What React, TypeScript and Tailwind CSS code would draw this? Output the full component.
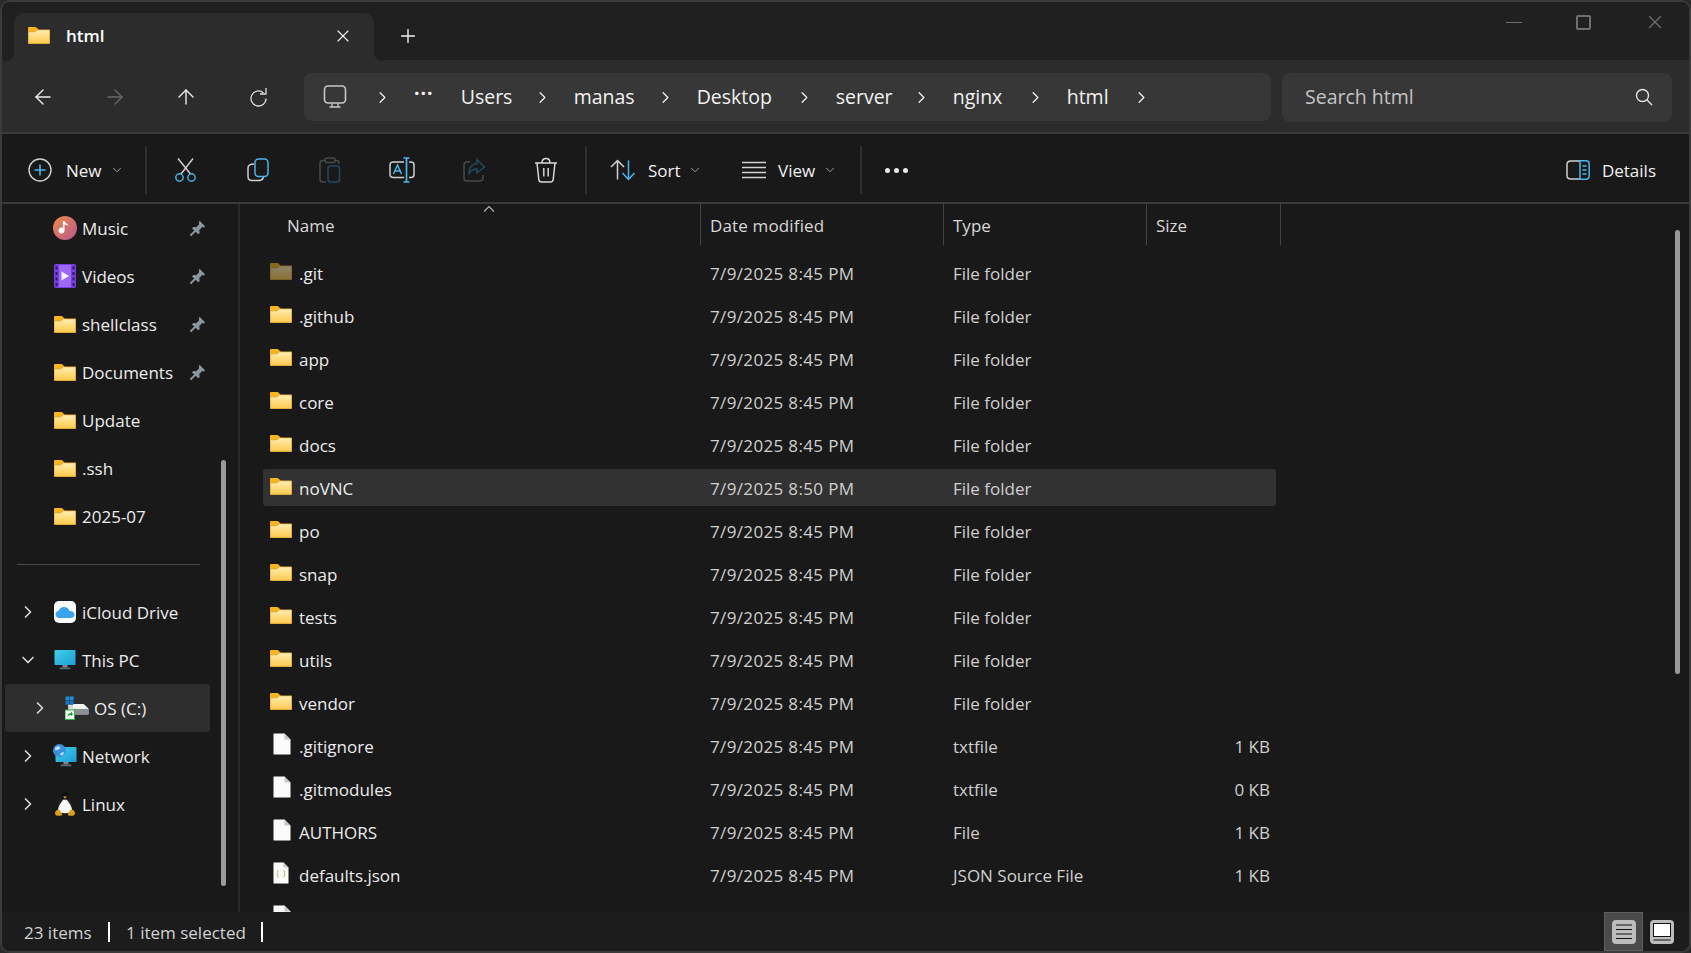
import { ArrowLeft, ArrowRight, ArrowUp, ChevronDown, ChevronRight, Plus, X } from "lucide-react";

const FONT = { fontFamily: '"Open Sans", "Noto Sans", sans-serif' };

function Folder({ dim = false }: { dim?: boolean }) {
  return (
    <svg width="22" height="17" viewBox="0 0 22 17" className={dim ? "shrink-0 opacity-50" : "shrink-0"}>
      <defs>
        <linearGradient id="fold" x1="0" y1="0" x2="0" y2="1">
          <stop offset="0" stopColor="#ffeeb0" />
          <stop offset="1" stopColor="#fdc950" />
        </linearGradient>
      </defs>
      <path d="M0 1.2C0 .5.5 0 1.2 0h6c.5 0 .9.2 1.2.5L11 3v3H0z" fill="#f8b61e" />
      <path d="M0 4.5h6.5L9 2.5h12c.6 0 1 .4 1 1V16c0 .6-.4 1-1 1H1c-.6 0-1-.4-1-1z" fill="#d9a233" />
      <path d="M.6 5.2h6.2L9.2 3.2h11.6c.3 0 .5.2.5.5v12c0 .4-.2.6-.5.6H1.1c-.3 0-.5-.2-.5-.6z" fill="url(#fold)" />
    </svg>
  );
}

function FileIcon({ json = false }: { json?: boolean }) {
  return (
    <svg width={json ? 16 : 18} height="22" viewBox={json ? "0 0 16 22" : "0 0 18 22"} className="shrink-0 ml-[3px]">
      <path
        d={json ? "M.5 1.2C.5.8.8.5 1.2.5h9.300l5 5v15.300c0 .4-.3.7-.7.7H1.2c-.4 0-.7-.3-.7-.7z" : "M.5 1.2C.5.8.8.5 1.2.5h10.300l6 6v14.300c0 .4-.3.7-.7.7H1.2c-.4 0-.7-.3-.7-.7z"}
        fill="#fbfbfb"
        stroke="#8f8f8f"
        strokeWidth=".6"
      />
      <path d={json ? "M10.500.7v4.800h4.800z" : "M11.500.7v5.800h5.800z"} fill="#c8c8c8" />
      {json && (
        <path
          d="M5.700 8.500c-1 0-1.200.5-1.200 1.300v1c0 .6-.3.9-.9 1 .6.100.9.400.9 1v1c0 .8.200 1.300 1.200 1.300M10.300 8.500c1 0 1.200.5 1.200 1.300v1c0 .6.300.9.900 1-.6.100-.9.400-.9 1v1c0 .8-.2 1.300-1.200 1.300"
          fill="none"
          stroke="#c3cb6a"
          strokeWidth="1.100"
        />
      )}
    </svg>
  );
}

function Pin() {
  return (
    <svg width="16" height="16" viewBox="0 0 16 16" className="shrink-0">
      <path d="M9.6.8 15.2 6.4l-1.3 1-1.6-.4-3 3 .3 3-1.3 1.2L2.1 8.4l1.1-1.4 3 .2 3-3-.4-1.6z" fill="#8a96a3" />
      <path d="M5 11 1 15" stroke="#8a96a3" strokeWidth="1.8" strokeLinecap="round" />
    </svg>
  );
}

function Music() {
  return (
    <svg width="24" height="24" viewBox="0 0 24 24">
      <defs>
        <linearGradient id="mus" x1="0" y1="0" x2="1" y2="1">
          <stop offset="0" stopColor="#f08a4b" />
          <stop offset="1" stopColor="#b8568f" />
        </linearGradient>
      </defs>
      <circle cx="12" cy="12" r="12" fill="url(#mus)" />
      <path d="M11.5 5v9.5a3 3 0 1 1-1.6-2.6V5zM11.5 5c.5 2.5 3.5 2.6 4 5-1.5-1-3-1.2-4-1.2z" fill="#fff" />
    </svg>
  );
}

function Videos() {
  return (
    <svg width="22" height="24" viewBox="0 0 22 24">
      <rect width="22" height="24" rx="2" fill="#7a3de0" />
      <rect x="5" y="1" width="12" height="22" fill="#9a6bf0" />
      <path d="M7.5 7.5v9l7.5-4.5z" fill="#f4f0ff" />
      <path d="M1.5 2.5h2v3h-2zM1.5 8h2v3h-2zM1.5 13.5h2v3h-2zM1.5 19h2v3h-2zM18.5 2.5h2v3h-2zM18.5 8h2v3h-2zM18.5 13.5h2v3h-2zM18.5 19h2v3h-2z" fill="#2a1866" />
    </svg>
  );
}

function ICloud() {
  return (
    <svg width="22" height="22" viewBox="0 0 22 22">
      <rect width="22" height="22" rx="5" fill="#f8f9fb" />
      <path d="M5.500 17C3 17 1.500 15.300 1.500 13.300c0-1.800 1.300-3.300 3.100-3.500C5.300 7.500 7.500 6 10 6c2.600 0 4.700 1.600 5.300 3.900 2.900-.2 5.200 1.200 5.200 3.700 0 2-1.700 3.400-3.800 3.400z" fill="#3ba2ec" />
    </svg>
  );
}

function Monitor({ w = 22 }: { w?: number }) {
  return (
    <svg width={w} height="20" viewBox="0 0 22 20">
      <defs>
        <linearGradient id="scr" x1="0" y1="0" x2="1" y2="1">
          <stop offset="0" stopColor="#3fd2e6" />
          <stop offset="1" stopColor="#1f9bd8" />
        </linearGradient>
      </defs>
      <rect x=".5" y="0" width="21" height="15" rx=".8" fill="url(#scr)" />
      <rect x="8.5" y="15" width="5" height="2.500" fill="#7b8794" />
      <rect x="5.500" y="17.500" width="11" height="1.800" rx=".6" fill="#5c6670" />
    </svg>
  );
}

function Network() {
  return (
    <div className="relative w-[24px] h-[24px]">
      <div className="absolute left-[2px] top-[3px]">
        <Monitor w={22} />
      </div>
      <svg width="13" height="13" viewBox="0 0 13 13" className="absolute left-0 top-0">
        <circle cx="6.500" cy="6.500" r="6.500" fill="#3c8fd8" />
        <path d="M2 4c2-2 4-2 5-1s-1 3-3 3-2 0-2-2zM8 9c1-1 3-1 3 0s-2 2.500-3 2.500-1-1.500 0-2.500z" fill="#bfe0f5" />
      </svg>
    </div>
  );
}

function Drive() {
  return (
    <svg width="24" height="24" viewBox="0 0 24 24">
      <path d="M3 8.500h16l4.500 4v6h-20z" fill="#d9dcdf" />
      <path d="M8 8h10.500L23 12.500H8z" fill="#f5f5f5" />
      <rect x="8" y="13" width="15.500" height="5" fill="#8d9094" />
      <rect x=".5" y=".5" width="3.800" height="3.800" fill="#1e8fdc" />
      <rect x="4.800" y=".5" width="3.800" height="3.800" fill="#1e8fdc" />
      <rect x=".5" y="4.800" width="3.800" height="3.800" fill="#1875c7" />
      <rect x="4.800" y="4.800" width="3.800" height="3.800" fill="#1875c7" />
      <rect x="0" y="14" width="9.500" height="9.500" fill="#f4fff4" stroke="#2fb344" />
      <path d="M2.500 21c0-3 1.500-4 3.500-4v-1.500l2 2.500-2 2.500V19c-1.500 0-2.500.5-3.500 2z" fill="#1c9e3a" />
    </svg>
  );
}

function Tux() {
  return (
    <svg width="20" height="24" viewBox="0 0 20 24">
      <ellipse cx="10" cy="13" rx="7" ry="9.500" fill="#202020" />
      <path d="M10 6C6.500 9 2.500 15 3 19c2 3 12 3 14 0 .5-4-3.500-10-7-13z" fill="#f8f8f8" />
      <circle cx="10" cy="4" r="3.800" fill="#101010" />
      <path d="M8 4.500h4l-2 2.200z" fill="#e9a81f" />
      <path d="M0 21c.5-2.500 2.500-4 4.500-3.500L7.500 23c-1.500 1-5 1-6.500.2-.6-.4-1-1.300-1-2.200zM20 21c-.5-2.500-2.500-4-4.500-3.500L12.500 23c1.500 1 5 1 6.500.2.6-.4 1-1.300 1-2.200z" fill="#dca01e" />
    </svg>
  );
}

function PcOutline() {
  return (
    <svg width="24" height="24" viewBox="0 0 24 24" fill="none" stroke="#c8c8c8" strokeWidth="1.600">
      <rect x="1.500" y="1" width="21" height="17" rx="3.500" />
      <path d="M9 18.500v3M15 18.500v3M6.500 22h11" strokeWidth="1.300" />
    </svg>
  );
}

function Refresh() {
  return (
    <svg width="20" height="20" viewBox="0 0 20 20" fill="none" stroke="#dcdcdc" strokeWidth="1.300">
      <path d="M17 11.500A7.500 7.500 0 1 1 14.500 5.900" />
      <path d="M17 1v6h-6" strokeLinejoin="round" />
    </svg>
  );
}

function Magnifier() {
  return (
    <svg width="18" height="18" viewBox="0 0 18 18" fill="none" stroke="#e4e4e4" strokeWidth="1.400">
      <circle cx="7.500" cy="7.500" r="6" />
      <path d="M11.800 11.800 17 17" />
    </svg>
  );
}

function Cut() {
  return (
    <svg width="24" height="24" viewBox="0 0 24 24" fill="none" strokeWidth="1.400">
      <path d="M4 .5 16.500 16M19 .5 7 16" stroke="#d2d2d2" />
      <circle cx="5.500" cy="19.500" r="3.700" stroke="#4db4ea" />
      <circle cx="17.500" cy="19.500" r="3.700" stroke="#4db4ea" />
    </svg>
  );
}

function Copy() {
  return (
    <svg width="24" height="24" viewBox="0 0 24 24" fill="none" strokeWidth="1.500">
      <path d="M8 6C4 6 2 7.500 2 10v8.500C2 21 3.500 22.500 6 22.500h7c2.500 0 4-1.200 4.500-3.500" stroke="#cfcfcf" />
      <rect x="9" y="1" width="13" height="17.500" rx="3.500" stroke="#4db4ea" />
    </svg>
  );
}

function Paste() {
  return (
    <svg width="24" height="26" viewBox="0 0 24 26" fill="none" strokeWidth="1.500">
      <path d="M7 3.500H5C3 3.500 2 4.500 2 6.500v16C2 24 3 25 5 25h3M17 3.500h1c2 0 3 1 3 3V7" stroke="#4a4a4a" />
      <rect x="7" y="1" width="10" height="4.500" rx="2" stroke="#4a4a4a" />
      <rect x="10" y="9" width="11.500" height="16" rx="2.500" stroke="#234a60" />
    </svg>
  );
}

function Rename() {
  return (
    <svg width="26" height="26" viewBox="0 0 26 26" fill="none" strokeWidth="1.500">
      <path d="M15 5H4.500C2.500 5 1 6 1 8v9.500c0 2 1.500 3 3.500 3H15M20 5h2c1.800 0 3 1 3 3v9.500c0 2-1.200 3-3 3h-2" stroke="#cfcfcf" />
      <path d="M4.500 17 8.500 8l4 9M6 14h5" stroke="#4db4ea" />
      <path d="M14.500 1h6M17.500 1v24M14.500 25h6" stroke="#4db4ea" strokeWidth="1.700" />
    </svg>
  );
}

function Share() {
  return (
    <svg width="24" height="24" viewBox="0 0 24 24" fill="none" strokeWidth="1.500">
      <path d="M8 4H5C3 4 2 5 2 7v13c0 2 1 3 3 3h13c2 0 3-1 3-3v-3" stroke="#484848" />
      <path d="M15 1.500 22.500 9 15 15v-4c-4 0-6 1.500-8 4.500 0-6 3-9.500 8-10z" stroke="#234a60" />
    </svg>
  );
}

function Trash() {
  return (
    <svg width="24" height="26" viewBox="0 0 24 26" fill="none" stroke="#d8d8d8" strokeWidth="1.500">
      <path d="M1 6h22M8 6c0-2.500 1-4.500 4-4.500S16 3.500 16 6M3 6l1.800 16.500c.2 1.600 1 2.500 2.700 2.500h9c1.700 0 2.500-.9 2.700-2.500L21 6M9.800 11v8.500M14.200 11v8.500" />
    </svg>
  );
}

function SortIcon() {
  return (
    <svg width="26" height="22" viewBox="0 0 26 22" fill="none" strokeWidth="1.500">
      <path d="M7.500 20.500V1.500M1 8l6.500-6.500L14 8" stroke="#d2d2d2" />
      <path d="M18.500 1.500v19M12.500 14l6 6.500 6-6.500" stroke="#4db4ea" />
    </svg>
  );
}

function ViewLines() {
  return (
    <svg width="24" height="18" viewBox="0 0 24 18" stroke="#d2d2d2" strokeWidth="1.500">
      <path d="M0 1.500h24M0 6.500h24M0 11.500h24M0 16.500h24" />
    </svg>
  );
}

function DetailsIcon() {
  return (
    <svg width="24" height="20" viewBox="0 0 24 20" fill="none" strokeWidth="1.500">
      <path d="M14 1H5C2.500 1 1 2.500 1 4.500v11C1 17.500 2.500 19 5 19h9" stroke="#cfcfcf" />
      <path d="M14 .8h6c2 0 3.200 1.500 3.200 3.700v11c0 2.200-1.200 3.700-3.200 3.700h-6z" stroke="#4db4ea" />
      <path d="M16.500 6h4M16.500 10h4M16.500 14h4" stroke="#4db4ea" />
    </svg>
  );
}

function PlusCircle() {
  return (
    <svg width="24" height="24" viewBox="0 0 24 24" fill="none" strokeWidth="1.400">
      <circle cx="12" cy="12" r="11" stroke="#d0d0d0" />
      <path d="M12 6.500v11M6.500 12h11" stroke="#4db4ea" strokeWidth="1.600" />
    </svg>
  );
}

function Crumb({ label, w }: { label: string; w: string }) {
  return (
    <div className={`flex items-center justify-between shrink-0 ${w}`}>
      <span>{label}</span>
      <ChevronRight size={19} strokeWidth={1.6} className="mr-[22px] text-[#f0f0f0]" />
    </div>
  );
}

function Sep() {
  return <div className="w-[2px] h-[48px] bg-[#2f2f2f] shrink-0" />;
}

function ToolBtn({ children }: { children: React.ReactNode }) {
  return <div className="w-[72px] h-[48px] flex items-center justify-center shrink-0">{children}</div>;
}

const pinned = ["shellclass", "Documents"];
const plain = ["Update", ".ssh", "2025-07"];

const folders = [".github", "app", "core", "docs"];
const folders2 = ["po", "snap", "tests", "utils", "vendor"];

function Row({
  icon,
  name,
  date = "7/9/2025 8:45 PM",
  type = "File folder",
  size,
  selected,
}: {
  icon: React.ReactNode;
  name?: string;
  date?: string;
  type?: string;
  size?: string;
  selected?: boolean;
}) {
  return (
    <div
      className={`grid grid-cols-[447px_243px_203px_120px] items-center h-[37px] w-[1013px] ml-[23px] shrink-0 rounded-[3px] text-[#cfcfcf] ${
        selected ? "bg-[#323232]" : ""
      }`}
    >
      <div className="flex items-center pl-[7px]">
        <div className="w-[29px] -mt-[3px]">{icon}</div>
        <span className="text-[#ececec] pt-[2px]">{name}</span>
      </div>
      <span className="pt-[2px] tracking-[0.35px]">{date}</span>
      <span className="pt-[2px]">{type}</span>
      <span className="pt-[2px] text-right pr-[6px]">{size}</span>
    </div>
  );
}

function NavRow({
  icon,
  label,
  pin,
  chevron,
  open,
  selected,
  indent,
}: {
  icon: React.ReactNode;
  label: string;
  pin?: boolean;
  chevron?: boolean;
  open?: boolean;
  selected?: boolean;
  indent?: boolean;
}) {
  return (
    <div className={`flex items-center h-[48px] w-[205px] ml-[3px] rounded-[3px] ${selected ? "bg-[#2e2e2e]" : ""}`}>
      <div className={`flex items-center justify-center shrink-0 w-[20px] text-[#d8d8d8] ${indent ? "ml-[25px]" : "ml-[13px]"}`}>
        {chevron &&
          (open ? (
            <ChevronDown size={24} strokeWidth={2} />
          ) : (
            <ChevronRight size={24} strokeWidth={2} />
          ))}
      </div>
      <div className="w-[24px] ml-[15px] flex items-center justify-center shrink-0">{icon}</div>
      <span className="ml-[5px] text-[#ececec]">{label}</span>
      {pin && (
        <span className="ml-auto mr-[4px]">
          <Pin />
        </span>
      )}
    </div>
  );
}

export default function App() {
  return (
    <div className="w-[1691px] h-[953px] bg-[#2a2a2a] overflow-hidden text-[17px] leading-none" style={FONT}>
      <div className="flex flex-col h-full border-2 border-[#3b3b3b] rounded-[10px] overflow-hidden bg-[#191919]">
        {/* tab strip */}
        <div className="flex items-end h-[58px] bg-[#202020] shrink-0 pl-[12px]">
          <div className="relative flex items-center w-[360px] h-[48px] bg-[#2c2c2c] rounded-t-[10px] pl-[14px] pb-[3px] -mb-[1px]">
            <div className="absolute bottom-0 -left-[10px] w-[10px] h-[10px] bg-[#2c2c2c]">
              <div className="w-full h-full bg-[#202020] rounded-br-[8px]" />
            </div>
            <div className="absolute bottom-0 -right-[10px] w-[10px] h-[10px] bg-[#2c2c2c]">
              <div className="w-full h-full bg-[#202020] rounded-bl-[8px]" />
            </div>
            <Folder />
            <span className="ml-[16px] font-semibold text-white">html</span>
            <X size={20} strokeWidth={1.4} className="ml-auto mr-[21px] text-[#eeeeee]" />
          </div>
          <div className="h-[48px] ml-[23px] flex items-center">
            <Plus size={22} strokeWidth={1.5} className="text-[#f0f0f0]" />
          </div>
          <div className="ml-auto flex self-start items-center h-[40px] text-[#6f6f6f] pr-[23px]">
            <div className="w-[16px] h-[1px] bg-[#6f6f6f] mr-[54px]" />
            <div className="w-[15px] h-[15px] border-2 border-[#6f6f6f] rounded-[2px] mr-[53px]" />
            <X size={22} strokeWidth={1.3} />
          </div>
        </div>

        {/* address row */}
        <div className="flex items-center h-[72px] pt-[2px] bg-[#2c2c2c] shrink-0">
          <ArrowLeft size={24} strokeWidth={1.4} className="ml-[29px] text-[#ededed]" />
          <ArrowRight size={24} strokeWidth={1.4} className="ml-[48px] text-[#686868]" />
          <ArrowUp size={24} strokeWidth={1.4} className="ml-[47px] text-[#ededed]" />
          <div className="ml-[51px] w-[20px]">
            <Refresh />
          </div>
          <div className="ml-[35px] flex items-center w-[967px] h-[48px] bg-[#373737] rounded-[8px] text-[19.5px] text-[#f2f2f2]">
            <div className="ml-[19px] mr-[26px]">
              <PcOutline />
            </div>
            <ChevronRight size={19} strokeWidth={1.6} className="text-[#f0f0f0]" />
            <span className="ml-[22px] mr-[27px] tracking-[1px] -mt-[8px] font-bold">···</span>
            <Crumb label="Users" w="w-[113px]" />
            <Crumb label="manas" w="w-[123px]" />
            <Crumb label="Desktop" w="w-[139px]" />
            <Crumb label="server" w="w-[117px]" />
            <Crumb label="nginx" w="w-[114px]" />
            <Crumb label="html" w="w-[106px]" />
          </div>
          <div className="ml-[11px] flex items-center justify-between w-[390px] h-[49px] bg-[#373737] rounded-[8px] pl-[23px] pr-[19px] text-[19.5px] text-[#c4c4c4]">
            <span>Search html</span>
            <Magnifier />
          </div>
        </div>
        <div className="h-[2px] bg-[#3a3a3a] shrink-0" />

        {/* command bar */}
        <div className="flex items-center h-[68px] pt-[4px] bg-[#191919] shrink-0 text-[#f0f0f0]">
          <div className="flex items-center w-[143px] pl-[26px]">
            <PlusCircle />
            <span className="ml-[14px]">New</span>
            <ChevronDown size={14} strokeWidth={1.4} className="ml-[8px] text-[#bdbdbd]" />
          </div>
          <Sep />
          <div className="flex ml-[3px]">
            <ToolBtn><Cut /></ToolBtn>
            <ToolBtn><Copy /></ToolBtn>
            <ToolBtn><Paste /></ToolBtn>
            <ToolBtn><Rename /></ToolBtn>
            <ToolBtn><Share /></ToolBtn>
            <ToolBtn><Trash /></ToolBtn>
          </div>
          <div className="ml-[3px]">
            <Sep />
          </div>
          <div className="flex items-center w-[132px] pl-[23px] shrink-0">
            <SortIcon />
            <span className="ml-[12px]">Sort</span>
            <ChevronDown size={14} strokeWidth={1.4} className="ml-[7px] text-[#bdbdbd]" />
          </div>
          <div className="flex items-center w-[141px] pl-[23px] shrink-0">
            <ViewLines />
            <span className="ml-[12px]">View</span>
            <ChevronDown size={14} strokeWidth={1.4} className="ml-[8px] text-[#bdbdbd]" />
          </div>
          <Sep />
          <div className="flex gap-[4px] ml-[23px]">
            <span className="w-[5px] h-[5px] rounded-full bg-[#e8e8e8]" />
            <span className="w-[5px] h-[5px] rounded-full bg-[#e8e8e8]" />
            <span className="w-[5px] h-[5px] rounded-full bg-[#e8e8e8]" />
          </div>
          <div className="ml-auto flex items-center pr-[33px]">
            <DetailsIcon />
            <span className="ml-[12px]">Details</span>
          </div>
        </div>
        <div className="h-[2px] bg-[#3a3a3a] shrink-0" />

        {/* body */}
        <div className="flex flex-1 min-h-0 bg-[#191919]">
          <div className="relative w-[236px] shrink-0 overflow-hidden text-[17px]">
            <NavRow icon={<Music />} label="Music" pin />
            <NavRow icon={<Videos />} label="Videos" pin />
            {pinned.map((n) => (
              <NavRow key={n} icon={<Folder />} label={n} pin />
            ))}
            {plain.map((n) => (
              <NavRow key={n} icon={<Folder />} label={n} />
            ))}
            <div className="h-[48px] flex items-center">
              <div className="ml-[15px] w-[183px] h-[1px] bg-[#4a4a4a]" />
            </div>
            <NavRow icon={<ICloud />} label="iCloud Drive" chevron />
            <NavRow icon={<Monitor />} label="This PC" chevron open />
            <NavRow icon={<Drive />} label="OS (C:)" chevron selected indent />
            <NavRow icon={<Network />} label="Network" chevron />
            <NavRow icon={<Tux />} label="Linux" chevron />
            <div className="absolute left-[219px] top-[256px] w-[5px] h-[426px] rounded-full bg-[#9a9a9a]" />
          </div>

          <div className="relative flex-1 min-w-0 border-l-2 border-[#2a2a2a] overflow-hidden">
            <div className="flex h-[41px] items-center text-[#d8d8d8] pt-[0px]">
              <div className="w-[461px] h-full flex items-center pl-[47px] pt-[2px] border-r border-[#434343]">Name</div>
              <div className="w-[243px] h-full flex items-center pl-[9px] pt-[2px] tracking-[0.15px] border-r border-[#434343]">Date modified</div>
              <div className="w-[203px] h-full flex items-center pl-[9px] pt-[2px] border-r border-[#434343]">Type</div>
              <div className="w-[134px] h-full flex items-center pl-[9px] pt-[2px] border-r border-[#434343]">Size</div>
            </div>
            <svg width="12" height="7" viewBox="0 0 12 7" fill="none" stroke="#b5b5b5" strokeWidth="1.100" className="absolute left-[243px] top-[1px]">
              <path d="M1 6.500 6 1.500l5 5" />
            </svg>
            <div className="flex flex-col gap-[6px] pt-[9px]">
              <Row icon={<Folder dim />} name=".git" />
              {folders.map((n) => (
                <Row key={n} icon={<Folder />} name={n} />
              ))}
              <Row icon={<Folder />} name="noVNC" date="7/9/2025 8:50 PM" selected />
              {folders2.map((n) => (
                <Row key={n} icon={<Folder />} name={n} />
              ))}
              <Row icon={<FileIcon />} name=".gitignore" type="txtfile" size="1 KB" />
              <Row icon={<FileIcon />} name=".gitmodules" type="txtfile" size="0 KB" />
              <Row icon={<FileIcon />} name="AUTHORS" type="File" size="1 KB" />
              <Row icon={<FileIcon json />} name="defaults.json" type="JSON Source File" size="1 KB" />
              <Row icon={<FileIcon />} date="" type="" />
            </div>
            <div className="absolute right-[9px] top-[26px] w-[5px] h-[444px] rounded-full bg-[#9a9a9a]" />
          </div>
        </div>

        {/* status bar */}
        <div className="flex items-center h-[39px] bg-[#1c1c1c] shrink-0 text-[#d2d2d2]">
          <span className="ml-[22px] w-[84px] pt-[2px]">23 items</span>
          <div className="w-[2px] h-[20px] bg-white" />
          <span className="ml-[16px] w-[135px] pt-[2px]">1 item selected</span>
          <div className="w-[2px] h-[20px] bg-white" />
          <div className="ml-auto flex h-full items-center mr-[15px]">
            <div className="w-[39px] h-full flex items-center justify-center bg-[#4a4a4a] border border-[#5f5f5f]">
              <svg width="24" height="24" viewBox="0 0 24 24">
                <rect width="24" height="24" rx="4" fill="#bdbdbd" />
                <path d="M4 5h16M4 9.500h16M4 14h16M4 18.500h16" stroke="#111" strokeWidth="1.200" />
              </svg>
            </div>
            <div className="w-[24px] h-[24px] ml-[7px]">
              <svg width="24" height="24" viewBox="0 0 24 24">
                <rect width="24" height="24" rx="4" fill="#bdbdbd" />
                <rect x="3.500" y="3.500" width="17" height="13" fill="#fff" stroke="#111" />
                <path d="M3.500 20h17" stroke="#111" strokeWidth="1.200" />
              </svg>
            </div>
          </div>
        </div>
      </div>
    </div>
  );
}
